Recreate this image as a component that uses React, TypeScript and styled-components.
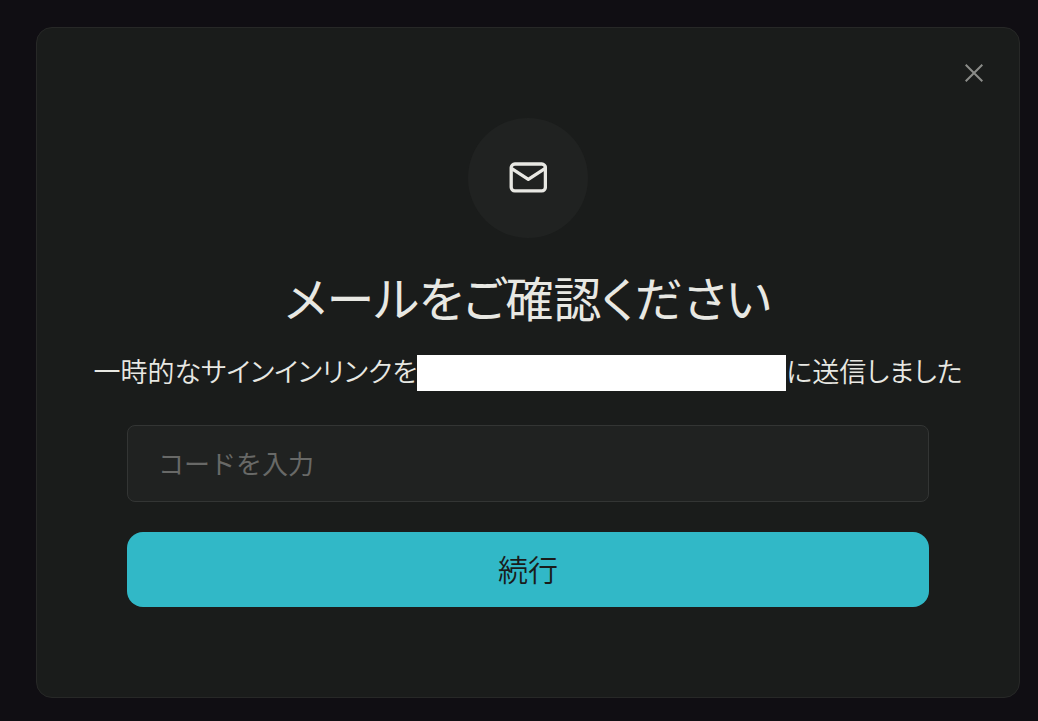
import React, { useState } from "react";
import styled, { createGlobalStyle } from "styled-components";

const GlobalStyle = createGlobalStyle`
  *, *::before, *::after { box-sizing: border-box; }
  body {
    margin: 0;
    background: #100e13;
    color: #e8e8e3;
    font-family: "Noto Sans CJK JP", sans-serif;
    font-weight: 350;
    font-feature-settings: "palt";
  }
`;

const Page = styled.main`
  min-height: 100vh;
  padding: 27px 18px 23px 36px;
  display: flex;
`;

const Dialog = styled.section`
  flex: 1;
  min-width: 0;
  display: flex;
  flex-direction: column;
  padding: 30px 30px 90px;
  background: #1a1c1b;
  border: 1px solid #272827;
  border-radius: 16px;
`;

const CloseButton = styled.button`
  align-self: flex-end;
  width: 30px;
  height: 30px;
  padding: 0;
  display: grid;
  place-items: center;
  border: 0;
  background: none;
  color: #8b8c89;
  cursor: pointer;
`;

const IconBadge = styled.div`
  width: 120px;
  height: 120px;
  margin: 30px auto 0;
  display: grid;
  place-items: center;
  border-radius: 50%;
  background: #202221;
`;

const Title = styled.h1`
  margin: 22px 0 0;
  font-size: 48px;
  line-height: 72px;
  font-weight: 400;
  text-align: center;
  white-space: nowrap;
`;

const Message = styled.p`
  margin: 23px 0 0;
  display: flex;
  justify-content: center;
  font-size: 27px;
  line-height: 32px;
  white-space: nowrap;
`;

const HiddenAddress = styled.span`
  flex: 0 1 369px;
  height: 36px;
  background: #ffffff;
`;

const Form = styled.form`
  margin-top: 34px;
  padding: 0 60px;
  display: flex;
  flex-direction: column;
  gap: 30px;
`;

const CodeInput = styled.input`
  width: 100%;
  height: 77px;
  padding: 0 30px 2px;
  border: 1px solid #333534;
  border-radius: 8px;
  background: #202221;
  color: #e8e8e3;
  font: inherit;
  font-size: 26px;
  font-weight: 400;
  font-feature-settings: normal;
  outline: none;

  &::placeholder {
    color: #686967;
    opacity: 1;
  }
`;

const SubmitButton = styled.button`
  height: 75px;
  padding: 0 0 4px;
  border: 0;
  border-radius: 16px;
  background: #31b8c7;
  color: #1a1c1b;
  font: inherit;
  font-size: 30px;
  cursor: pointer;
`;

const CloseIcon = () => (
  <svg width="18" height="18" viewBox="0 0 18 18" fill="none" stroke="currentColor" strokeWidth="2" aria-hidden="true">
    <path d="M.7.7 17.3 17.3M17.3.7.7 17.3" />
  </svg>
);

const MailIcon = () => (
  <svg width="38" height="32" viewBox="0 0 38 32" fill="none" stroke="#e8e8e3" strokeWidth="3.3" strokeLinejoin="round" aria-hidden="true">
    <rect x="2.2" y="2" width="34.2" height="26.8" rx="3.6" />
    <path d="M2.8 6.6 19.3 17.4 35.8 6.6" />
  </svg>
);

export default function App() {
  const [code, setCode] = useState("");

  return (
    <>
      <GlobalStyle />
      <Page>
        <Dialog role="dialog" aria-labelledby="dialog-title">
          <CloseButton type="button" aria-label="閉じる">
            <CloseIcon />
          </CloseButton>
          <IconBadge>
            <MailIcon />
          </IconBadge>
          <Title id="dialog-title">メールをご確認ください</Title>
          <Message>
            <span>一時的なサインインリンクを</span>
            <HiddenAddress />
            <span>に送信しました</span>
          </Message>
          <Form onSubmit={(event: React.FormEvent) => event.preventDefault()}>
            <CodeInput
              type="text"
              aria-label="コードを入力"
              placeholder="コードを入力"
              value={code}
              onChange={(event: React.ChangeEvent<HTMLInputElement>) => setCode(event.target.value)}
            />
            <SubmitButton type="submit">続行</SubmitButton>
          </Form>
        </Dialog>
      </Page>
    </>
  );
}
